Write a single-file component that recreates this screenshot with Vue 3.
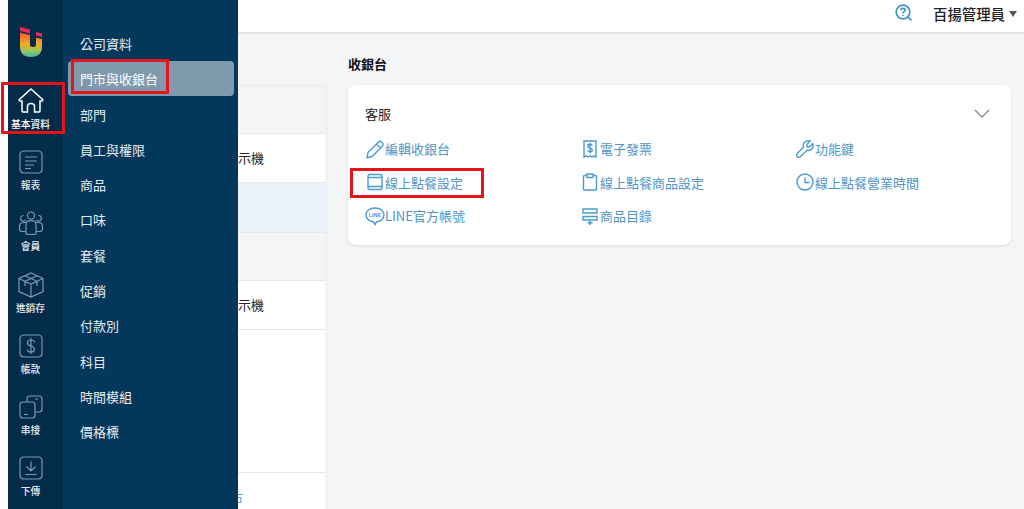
<template>
  <div class="page">
    <aside class="sidebar">
      <nav class="rail">
        <svg class="logo" viewBox="0 0 22 30" width="22" height="30">
          <defs>
            <linearGradient id="logoGrad" x1="0" y1="0" x2="0" y2="1">
              <stop offset="0" stop-color="#f0553a" />
              <stop offset="0.45" stop-color="#f5a623" />
              <stop offset="0.75" stop-color="#9cc65a" />
              <stop offset="1" stop-color="#3fb8a0" />
            </linearGradient>
          </defs>
          <path d="M0 0 L10 2.5 V6.5 L0 4 Z M16 5 L22 6.5 V10 L16 8.5 Z" fill="#ea2a5c" />
          <path
            d="M0 5.5 L10 8 V17.5 Q10 20 13 20 Q16 20 16 17.5 V10.5 L22 12 V19 Q22 30 11 30 Q0 30 0 19 Z"
            fill="url(#logoGrad)"
          />
        </svg>
        <a
          v-for="item in railItems"
          :key="item.label"
          class="rail-item"
          :class="{ active: item.active }"
        >
          <svg class="rail-icon" viewBox="0 0 26 26" width="26" height="26">
            <path :d="item.d" />
          </svg>
          <span>{{ item.label }}</span>
        </a>
      </nav>
      <ul class="menu">
        <li
          v-for="name in menuItems"
          :key="name"
          :class="{ current: name === '門市與收銀台' }"
        >
          {{ name }}
        </li>
      </ul>
    </aside>

    <header class="topbar">
      <svg class="help" viewBox="0 0 18 18" width="18" height="18">
        <path d="M8 1.2 A6.8 6.8 0 1 0 8 14.8 A6.8 6.8 0 1 0 8 1.2 Z M13 13 L16.5 16.5" />
        <path d="M5.9 6.3 Q6 4.4 8 4.4 Q10.1 4.4 10.1 6.1 Q10.1 7.2 8.9 7.8 Q8 8.3 8 9.4 M8 10.9 V11.9" />
      </svg>
      <span class="user">百揚管理員</span>
      <i class="caret"></i>
    </header>

    <main class="content">
      <section class="store-list">
        <div class="store-head"></div>
        <div class="store-row">示機</div>
        <div class="store-row selected"></div>
        <div class="store-head"></div>
        <div class="store-row">示機</div>
        <div class="store-fill"></div>
        <div class="store-foot">門市</div>
      </section>

      <section class="pos">
        <h2>收銀台</h2>
        <div class="pos-card">
          <div class="pos-title">
            <span>客服</span>
            <svg viewBox="0 0 16 9" width="16" height="9" class="chevron">
              <path d="M1 1 L8 8 L15 1" />
            </svg>
          </div>
          <div class="links">
            <a v-for="link in links" :key="link.label" class="link">
              <svg viewBox="0 0 20 20" width="20" height="20">
                <path :d="link.d" />
                <text v-if="link.line" x="10" y="11.2" text-anchor="middle" class="line-word">LINE</text>
              </svg>
              <span>{{ link.label }}</span>
            </a>
          </div>
        </div>
      </section>
    </main>

    <div class="mark mark-home"></div>
    <div class="mark mark-store"></div>
    <div class="mark mark-online"></div>
  </div>
</template>

<script setup>
const railItems = [
  {
    label: "基本資料",
    active: true,
    d: "M13 1 L24.6 11.4 Q25.2 13 23.6 13 H22 V23 Q22 24 21 24 H16.5 V18.5 Q16.5 15.5 13 15.5 Q9.5 15.5 9.5 18.5 V24 H5 Q4 24 4 23 V13 H2.4 Q0.8 13 1.4 11.4 Z",
  },
  {
    label: "報表",
    d: "M6 2 H20 Q24 2 24 6 V20 Q24 24 20 24 H6 Q2 24 2 20 V6 Q2 2 6 2 Z M7 8 H19 M7 12 H19 M7 16 H16 M7 19.5 H13",
  },
  {
    label: "會員",
    d: "M13 2 A3.6 3.6 0 1 0 13 9.2 A3.6 3.6 0 1 0 13 2 Z M8 24 V14.5 Q8 10.8 11.5 10.8 H14.5 Q18 10.8 18 14.5 V24 Q13 25 8 24 Z M5.5 5.5 A2.8 2.8 0 1 0 5.5 11.1 A2.8 2.8 0 0 0 7.8 9.8 M20.5 5.5 A2.8 2.8 0 1 1 20.5 11.1 A2.8 2.8 0 0 1 18.2 9.8 M8 21.5 H4 Q1.5 21.5 1.5 19 V16 Q1.5 12.5 6 12.5 H8 M18 21.5 H22 Q24.5 21.5 24.5 19 V16 Q24.5 12.5 20 12.5 H18",
  },
  {
    label: "進銷存",
    d: "M13 1 L25 6.5 V19.5 L13 25 L1 19.5 V6.5 Z M1 6.5 L13 12 L25 6.5 M13 12 V25 M7 3.8 L19 9.3 V14 M19 3.8 L7 9.3 V14",
  },
  {
    label: "帳款",
    d: "M6 2 H20 Q24 2 24 6 V20 Q24 24 20 24 H6 Q2 24 2 20 V6 Q2 2 6 2 Z M16.5 9.5 Q16.5 7 13 7 Q9.5 7 9.5 9.8 Q9.5 12.2 13 13 Q16.5 13.8 16.5 16.2 Q16.5 19 13 19 Q9.5 19 9.5 16.5 M13 5 V21",
  },
  {
    label: "串接",
    d: "M9 8 V5 Q9 2 12 2 H21 Q24 2 24 5 V15 Q24 18 21 18 H17 M5 8 H14 Q17 8 17 11 V21 Q17 24 14 24 H5 Q2 24 2 21 V11 Q2 8 5 8 Z M6 20.5 H10 M17 5 H20",
  },
  {
    label: "下傳",
    d: "M6 2 H20 Q24 2 24 6 V20 Q24 24 20 24 H6 Q2 24 2 20 V6 Q2 2 6 2 Z M13 6.5 V16 M8.5 11.5 L13 16 L17.5 11.5 M7.5 19.5 H18.5",
  },
];

const menuItems = [
  "公司資料",
  "門市與收銀台",
  "部門",
  "員工與權限",
  "商品",
  "口味",
  "套餐",
  "促銷",
  "付款別",
  "科目",
  "時間模組",
  "價格標",
];

const links = [
  {
    label: "編輯收銀台",
    d: "M3 13.5 L13.5 3 Q15 1.6 16.5 3 L17.5 4 Q18.8 5.5 17.5 7 L7 17.5 L2 18.5 Z M11.5 5 L15.5 9",
  },
  {
    label: "電子發票",
    d: "M4 2 H16 V18 L14 16.8 L12 18 L10 16.8 L8 18 L6 16.8 L4 18 Z M12.2 6.8 Q12 5.3 10 5.3 Q7.8 5.3 7.8 7 Q7.8 8.6 10 9 Q12.2 9.5 12.2 11.2 Q12.2 12.8 10 12.8 Q8 12.8 7.8 11.3 M10 4 V14.2",
  },
  {
    label: "功能鍵",
    d: "M17.8 4.6 L14.6 7.8 L12 7.8 L12 5.2 L15.2 2 Q11 1 9 4 Q7.8 6 8.6 8 L2 14.6 Q1 16.2 2.2 17.6 Q3.8 19 5.4 17.8 L12 11.2 Q14.2 12 16.2 10.6 Q18.8 8.6 17.8 4.6 Z",
  },
  {
    label: "線上點餐設定",
    d: "M5 2.5 H15 Q17 2.5 17 4.5 V15.5 Q17 17.5 15 17.5 H5 Q3 17.5 3 15.5 V4.5 Q3 2.5 5 2.5 Z M3 5.5 H17 M3 14.5 H17",
  },
  {
    label: "線上點餐商品設定",
    d: "M7 3.5 H4.5 Q3.5 3.5 3.5 4.5 V17 Q3.5 18 4.5 18 H15.5 Q16.5 18 16.5 17 V4.5 Q16.5 3.5 15.5 3.5 H13 M7 2 H13 V5.5 H7 Z",
  },
  {
    label: "線上點餐營業時間",
    d: "M10 2 A8 8 0 1 0 10 18 A8 8 0 1 0 10 2 Z M10 5.5 V10.5 H14.5",
  },
  {
    label: "LINE官方帳號",
    line: true,
    d: "M10 2 C4.5 2 1 5 1 9 C1 12.8 4.5 15.5 8.5 15.8 L10 18.5 L11.5 15.8 C15.5 15.5 19 12.8 19 9 C19 5 15.5 2 10 2 Z",
  },
  {
    label: "商品目錄",
    d: "M3 3 H17 V7 H3 Z M3 10.5 H17 V14 H3 Z M10 14 V19 M7.5 16.8 H12.5",
  },
];
</script>

<style>
html,
body {
  margin: 0;
  background: #fff;
  overflow: hidden;
}
</style>

<style scoped>
.page {
  position: relative;
  width: 1024px;
  height: 509px;
  overflow: hidden;
  background: #f4f5f7;
  font-family: "Noto Sans CJK TC", "Liberation Sans", sans-serif;
  color: #222;
}

.sidebar {
  position: absolute;
  top: 0;
  left: 8px;
  bottom: 0;
  z-index: 2;
  display: flex;
  width: 230px;
}
.page::before {
  content: "";
  position: absolute;
  top: 0;
  left: 0;
  bottom: 0;
  width: 8px;
  background: #fff;
  z-index: 1;
}
.rail {
  display: flex;
  flex-direction: column;
  align-items: center;
  width: 45px;
  padding: 27px 10px 0 0;
  flex-shrink: 0;
  background: #032c4b;
}
.logo {
  flex-shrink: 0;
  margin-bottom: 31px;
}
.rail-item {
  display: flex;
  flex-direction: column;
  align-items: center;
  height: 61.2px;
  flex-shrink: 0;
  font-size: 9.75px;
  font-weight: 500;
  line-height: 14px;
  color: #e6edf2;
  white-space: nowrap;
}
.rail-item span {
  margin-top: 3px;
}
.rail-icon {
  flex-shrink: 0;
  fill: none;
  stroke: #7f98aa;
  stroke-width: 1.2;
}
.rail-item.active .rail-icon {
  stroke: #fff;
  stroke-width: 1.5;
}
.rail-item.active {
  color: #fff;
}

.menu {
  flex: 1;
  list-style: none;
  margin: 0;
  padding: 25.7px 4px 0 5px;
  background: #03375b;
  color: #e6edf2;
  font-size: 13px;
}
.menu li {
  display: flex;
  align-items: center;
  height: 35.33px;
  padding-left: 12px;
  border-radius: 4px;
}
.menu li.current {
  background: #7f99ad;
  color: #fff;
}

.topbar {
  display: flex;
  align-items: center;
  justify-content: flex-end;
  height: 26px;
  padding: 0 7px 6px 0;
  background: #fff;
  box-shadow: 0 1px 2px rgba(0, 0, 0, 0.14);
}
.help {
  margin: 0 20px 0 0;
  fill: none;
  stroke: #3f96cf;
  stroke-width: 1.7;
}
.user {
  font-size: 14.4px;
  font-weight: 500;
  color: #222;
}
.caret {
  width: 0;
  height: 0;
  margin: 2px 0 0 4px;
  border-left: 4px solid transparent;
  border-right: 4px solid transparent;
  border-top: 6px solid #555;
}

.content {
  display: flex;
  gap: 21px;
  height: 477px;
  padding-left: 63px;
}
.store-list {
  display: flex;
  flex-direction: column;
  width: 264px;
  height: 424px;
  margin-top: 53px;
  box-sizing: border-box;
  border: 1px solid #e8eaed;
  border-bottom: 0;
  border-radius: 8px 8px 0 0;
  font-size: 13px;
}
.store-head {
  height: 47px;
  flex-shrink: 0;
  border-bottom: 1px solid #e4e6e9;
}
.store-row {
  display: flex;
  align-items: center;
  justify-content: flex-end;
  height: 47px;
  flex-shrink: 0;
  padding: 0 62px 1px 0;
  background: #fff;
  border-bottom: 1px solid #e4e6e9;
}
.store-row.selected {
  height: 48px;
  background: #ebf2f9;
}
.store-fill {
  flex: 1;
  background: #fff;
  border-bottom: 1px solid #e4e6e9;
}
.store-foot {
  display: flex;
  align-items: center;
  justify-content: flex-end;
  height: 36px;
  flex-shrink: 0;
  padding: 12px 83px 0 0;
  box-sizing: border-box;
  background: #fff;
  color: #5c9ccb;
}

.pos {
  width: 663px;
}
.pos h2 {
  margin: 22px 0 11px;
  font-size: 13px;
  line-height: 20px;
  font-weight: 700;
  color: #111;
}
.pos-card {
  height: 160px;
  box-sizing: border-box;
  padding: 18px 21px 0 17px;
  background: #fff;
  border-radius: 8px;
  box-shadow: 0 1px 3px rgba(0, 0, 0, 0.1);
}
.pos-title {
  display: flex;
  align-items: center;
  justify-content: space-between;
  height: 20px;
  font-size: 13px;
  color: #222;
}
.chevron {
  fill: none;
  stroke: #8a8a8a;
  stroke-width: 1.3;
}
.links {
  display: grid;
  grid-template-columns: repeat(3, 215px);
  grid-auto-rows: 33.5px;
  margin-top: 9px;
}
.link {
  display: flex;
  align-items: center;
  font-size: 13px;
  color: #4f95c8;
  white-space: nowrap;
}
.link svg {
  flex-shrink: 0;
  fill: none;
  stroke: #4a9ad4;
  stroke-width: 1.4;
  overflow: visible;
}
.line-word {
  font-family: "Liberation Sans", sans-serif;
  font-size: 5.5px;
  font-weight: 700;
  fill: #4a9ad4;
  stroke: none;
}

.mark {
  position: absolute;
  z-index: 3;
  box-sizing: border-box;
  border: 3px solid #e3151a;
}
.mark-home {
  left: 1px;
  top: 82px;
  width: 64px;
  height: 52px;
}
.mark-store {
  left: 71px;
  top: 59px;
  width: 98px;
  height: 35px;
}
.mark-online {
  left: 350px;
  top: 168px;
  width: 134px;
  height: 30px;
}
</style>
